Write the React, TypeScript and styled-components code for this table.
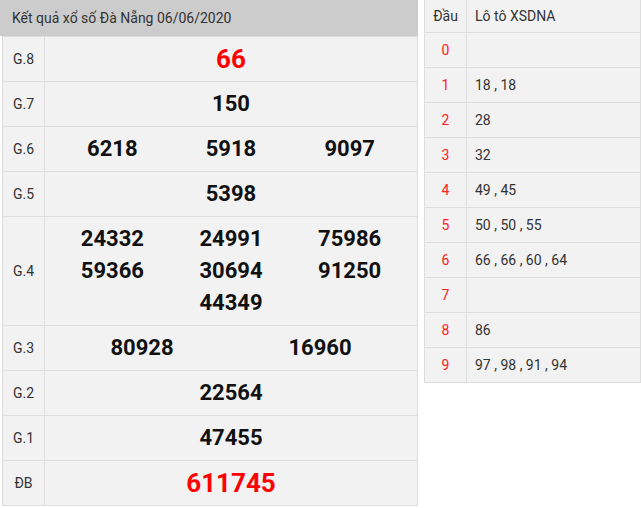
import React from "react"
import styled, { createGlobalStyle } from "styled-components"

const Global = createGlobalStyle`
body{
margin:0;
background:#fff;
font-family:Roboto, "Liberation Sans", Arial, sans-serif;
}
`

interface iPrize {
  label: string
  cols: number
  nums: string[]
  kind?: "red" | "special"
  height?: number
}

const prizes: iPrize[] = [
  { label: "G.8", cols: 1, nums: ["66"], kind: "red" },
  { label: "G.7", cols: 1, nums: ["150"] },
  { label: "G.6", cols: 3, nums: ["6218", "5918", "9097"] },
  { label: "G.5", cols: 1, nums: ["5398"] },
  { label: "G.4", cols: 3, nums: ["24332", "24991", "75986", "59366", "30694", "91250", "", "44349", ""], height: 108 },
  { label: "G.3", cols: 2, nums: ["80928", "16960"] },
  { label: "G.2", cols: 1, nums: ["22564"] },
  { label: "G.1", cols: 1, nums: ["47455"] },
  { label: "ĐB", cols: 1, nums: ["611745"], kind: "special" },
]

const loto = [
  "",
  "18 , 18",
  "28",
  "32",
  "49 , 45",
  "50 , 50 , 55",
  "66 , 66 , 60 , 64",
  "",
  "86",
  "97 , 98 , 91 , 94",
]

const App = () => {
  return (
    <Page>
      <Global />
      <Results>
        <Title>Kết quả xổ số Đà Nẵng 06/06/2020</Title>
        <Board>
          {prizes.map((p) => (
            <Row key={p.label} h={p.height ?? 44}>
              <Label>{p.label}</Label>
              <Values cols={p.cols}>
                {p.nums.map((n, i) => (
                  <Num key={i} kind={p.kind}>{n}</Num>
                ))}
              </Values>
            </Row>
          ))}
        </Board>
      </Results>
      <Loto>
        <LotoRow head>
          <Head>Đầu</Head>
          <LotoText>Lô tô XSDNA</LotoText>
        </LotoRow>
        {loto.map((t, i) => (
          <LotoRow key={i}>
            <Digit>{i}</Digit>
            <LotoText>{t}</LotoText>
          </LotoRow>
        ))}
      </Loto>
    </Page>
  )
}

export default App

const Page = styled.div`
display:flex;
align-items:flex-start;
gap:6px;
`
const Results = styled.div`
width:418px;
`
const Title = styled.div`
height:36px;
background-color:#cccccc;
color:#333;
font-size:14px;
line-height:36px;
padding-left:12px;
box-sizing:border-box;
`
const Board = styled.div`
margin-left:2px;
border-top:1px solid #dddddd;
border-left:1px solid #dddddd;
border-right:1px solid #dddddd;
background-color:#f2f2f2;
`
const Row = styled.div<{ h: number }>`
display:flex;
height:${({ h }) => h}px;
border-bottom:1px solid #dddddd;
`
const Label = styled.div`
width:41px;
flex-shrink:0;
border-right:1px solid #dddddd;
display:flex;
align-items:center;
justify-content:center;
font-size:14px;
color:#333;
`
const Values = styled.div<{ cols: number }>`
flex:1;
display:grid;
grid-template-columns:repeat(${({ cols }) => cols}, 1fr);
align-content:center;
padding:0 8px;
`
const Num = styled.div<{ kind?: string }>`
text-align:center;
font-weight:bold;
line-height:32px;
font-size:${({ kind }) => (kind ? "26px" : "22px")};
color:${({ kind }) => (kind ? "#ff0000" : "#111")};
`
const Loto = styled.div`
width:217px;
box-sizing:border-box;
border-left:1px solid #dddddd;
border-right:1px solid #dddddd;
background-color:#f2f2f2;
`
const LotoRow = styled.div<{ head?: boolean }>`
display:flex;
height:${({ head }) => (head ? 32 : 34)}px;
border-bottom:1px solid #dddddd;
font-size:14px;
color:#333;
`
const Head = styled.div`
width:41px;
flex-shrink:0;
border-right:1px solid #dddddd;
display:flex;
align-items:center;
justify-content:center;
`
const Digit = styled(Head)`
color:#ff2020;
`
const LotoText = styled.div`
flex:1;
display:flex;
align-items:center;
padding-left:8px;
`
